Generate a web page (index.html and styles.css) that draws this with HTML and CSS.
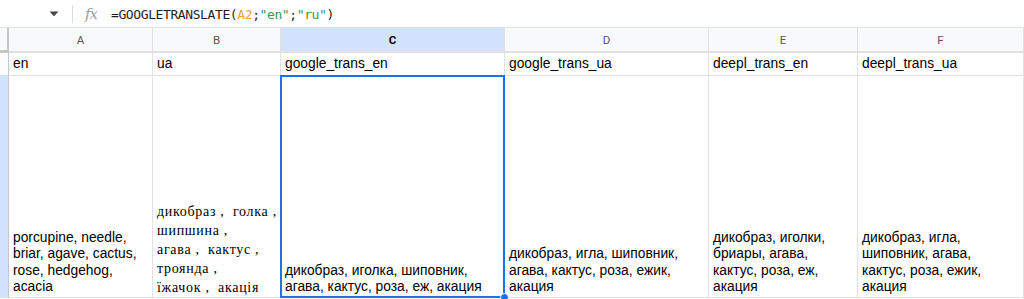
FILE: index.html
```html
<!DOCTYPE html>
<html lang="ru">
<head>
<meta charset="utf-8">
<title>Sheet</title>
<link rel="stylesheet" href="styles.css">
</head>
<body>
<div class="formula-bar">
  <div class="namebox-end">
    <svg class="caret" width="10" height="6" viewBox="0 0 10 6"><path d="M0.5 0.5h9L5 5.2z" fill="#444746"/></svg>
  </div>
  <div class="divider"></div>
  <span class="fx">fx</span>
  <div class="formula">=GOOGLETRANSLATE(<span class="ref">A2</span>;<span class="str">"en"</span>;<span class="str">"ru"</span>)</div>
</div>
<div class="sheet">
  <div class="corner"></div>
  <div class="colhead">A</div>
  <div class="colhead">B</div>
  <div class="colhead active">C</div>
  <div class="colhead">D</div>
  <div class="colhead">E</div>
  <div class="colhead">F</div>

  <div class="rowhead"></div>
  <div class="cell">en</div>
  <div class="cell">ua</div>
  <div class="cell">google_trans_en</div>
  <div class="cell">google_trans_ua</div>
  <div class="cell">deepl_trans_en</div>
  <div class="cell">deepl_trans_ua</div>

  <div class="rowhead active"></div>
  <div class="cell tall"><span>porcupine, needle,<br>briar, agave, cactus,<br>rose, hedgehog,<br>acacia</span></div>
  <div class="cell tall serif"><span>дикобраз ,  голка ,<br>шипшина ,<br>агава ,  кактус ,<br>троянда ,<br>їжачок ,  акація</span></div>
  <div class="cell tall selected"><span>дикобраз, иголка, шиповник,<br>агава, кактус, роза, еж, акация</span><i class="handle"></i></div>
  <div class="cell tall"><span>дикобраз, игла, шиповник,<br>агава, кактус, роза, ежик,<br>акация</span></div>
  <div class="cell tall"><span>дикобраз, иголки,<br>бриары, агава,<br>кактус, роза, еж,<br>акация</span></div>
  <div class="cell tall"><span>дикобраз, игла,<br>шиповник, агава,<br>кактус, роза, ежик,<br>акация</span></div>
</div>
</body>
</html>
```
FILE: styles.css
```css
* { box-sizing: border-box; }
html, body { margin: 0; padding: 0; background: #fff; }
body {
  width: 1024px;
  height: 299px;
  overflow: hidden;
  font-family: "Liberation Sans", Arial, sans-serif;
  color: #000;
}

.formula-bar {
  height: 28px;
  border-bottom: 1px solid #e1e3e1;
  display: flex;
  align-items: center;
}
.namebox-end {
  width: 72px;
  display: flex;
  justify-content: flex-end;
  padding-right: 13px;
  padding-top: 1px;
}
.caret { display: block; }
.divider {
  width: 1px;
  height: 18px;
  background: #dadce0;
}
.fx {
  font-family: "DejaVu Serif", "Liberation Serif", serif;
  font-style: italic;
  font-size: 15px;
  color: #9aa0a6;
  margin-left: 12px;
  width: 26px;
  letter-spacing: -1px;
}
.formula {
  font-family: "DejaVu Sans Mono", monospace;
  font-size: 13px;
  letter-spacing: -0.4px;
  color: #1f1f1f;
  padding-top: 1px;
}
.formula .ref { color: #e9a23b; }
.formula .str { color: #2f9a52; }

.sheet {
  display: grid;
  grid-template-columns: 9px 144px 128px 224px 204px 149px 166px;
  grid-template-rows: 25px 23px 222px;
}
.corner {
  background: #f8f9fa;
  border-right: 2px solid #c4c7c5;
  border-bottom: 3px solid #c4c7c5;
}
.colhead {
  background: #f8f9fa;
  border-right: 1px solid #e1e1e1;
  border-bottom: 2px solid #e1e1e1;
  display: flex;
  align-items: center;
  justify-content: center;
  font-family: Roboto, "Liberation Sans", sans-serif;
  font-size: 11.5px;
  color: #575757;
  padding-top: 1px;
}
.colhead.active {
  background: #d3e3fd;
  color: #0b0b0b;
  font-weight: 700;
}
.rowhead {
  background: #fcfcfc;
  border-right: 1px solid #c4c7c5;
  border-bottom: 1px solid #e1e1e1;
}
.rowhead.active { background: #d3e3fd; }

.cell {
  border-right: 1px solid #e2e2e2;
  border-bottom: 1px solid #e2e2e2;
  display: flex;
  align-items: flex-end;
  padding: 0 3px 2px 4px;
  font-size: 13.8px;
  line-height: 16.6px;
  white-space: nowrap;
  overflow: hidden;
}
.cell.tall { padding-bottom: 1px; }
.cell.serif {
  font-family: "Liberation Serif", "Times New Roman", serif;
  font-size: 14px;
  letter-spacing: 0.7px;
  line-height: 19px;
  white-space: pre;
  padding-bottom: 0;
}
.cell.selected { position: relative; overflow: visible; }
.cell.selected::after {
  content: "";
  position: absolute;
  left: -1px;
  top: -1px;
  right: -1px;
  bottom: -1px;
  border: 2px solid #1a73e8;
  pointer-events: none;
}
.handle {
  position: absolute;
  right: -5px;
  bottom: -5px;
  width: 9px;
  height: 9px;
  border-radius: 50%;
  background: #1a73e8;
  border: 1px solid #fff;
  z-index: 2;
}
```
